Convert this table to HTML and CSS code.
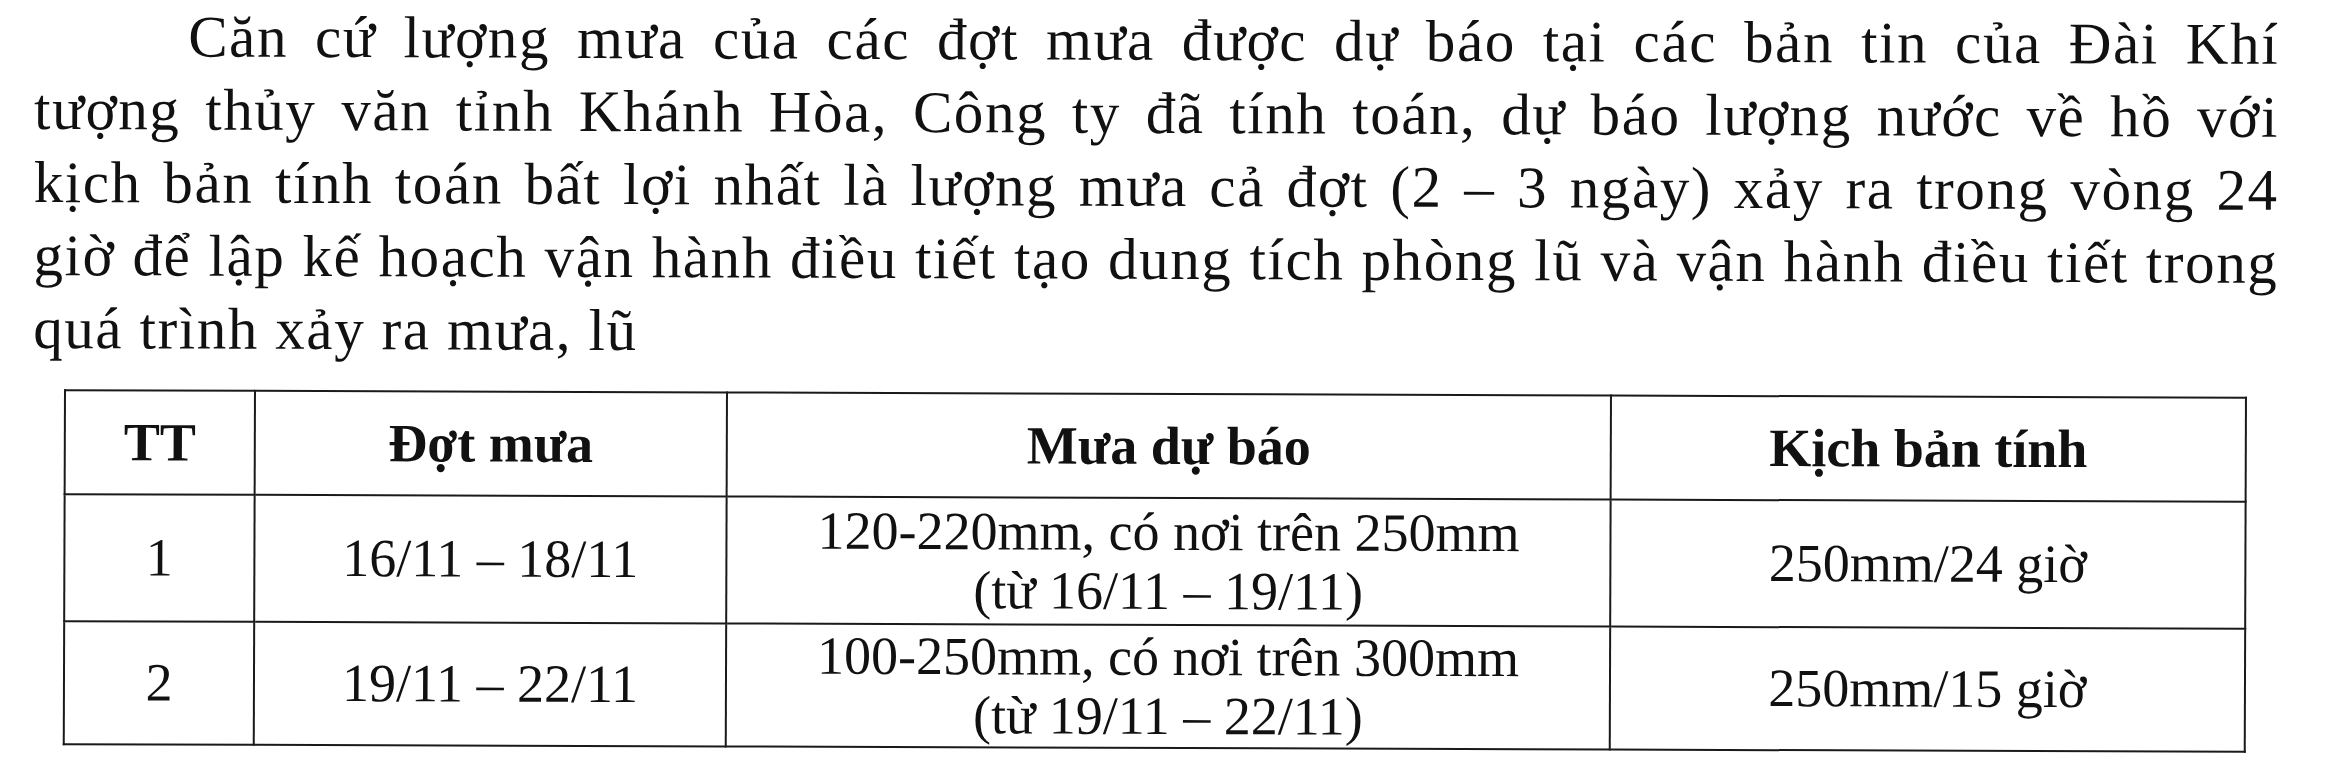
FILE: index.html
```html
<!DOCTYPE html>
<html lang="vi">
<head>
<meta charset="utf-8">
<title>Kịch bản mưa</title>
<link rel="stylesheet" href="styles.css">
</head>
<body>
<main class="page">
  <p class="para">
    <span class="ln ln-first">Căn cứ lượng mưa của các đợt mưa được dự báo tại các bản tin của Đài Khí</span>
    <span class="ln">tượng thủy văn tỉnh Khánh Hòa, Công ty đã tính toán, dự báo lượng nước về hồ với</span>
    <span class="ln">kịch bản tính toán bất lợi nhất là lượng mưa cả đợt (2 – 3 ngày) xảy ra trong vòng 24</span>
    <span class="ln">giờ để lập kế hoạch vận hành điều tiết tạo dung tích phòng lũ và vận hành điều tiết trong</span>
    <span class="ln ln-last">quá trình xảy ra mưa, lũ</span>
  </p>
  <table class="rain">
    <colgroup>
      <col class="c-tt">
      <col class="c-dot">
      <col class="c-mua">
      <col class="c-kb">
    </colgroup>
    <thead>
      <tr class="r-head">
        <th>TT</th>
        <th>Đợt mưa</th>
        <th>Mưa dự báo</th>
        <th>Kịch bản tính</th>
      </tr>
    </thead>
    <tbody>
      <tr class="r-1">
        <td>1</td>
        <td>16/11 – 18/11</td>
        <td>120-220mm, có nơi trên 250mm<br>(từ 16/11 – 19/11)</td>
        <td>250mm/24 giờ</td>
      </tr>
      <tr class="r-2">
        <td>2</td>
        <td>19/11 – 22/11</td>
        <td>100-250mm, có nơi trên 300mm<br>(từ 19/11 – 22/11)</td>
        <td>250mm/15 giờ</td>
      </tr>
    </tbody>
  </table>
</main>
</body>
</html>
```

FILE: styles.css
```css
html, body {
  margin: 0;
  padding: 0;
  background: #ffffff;
}

body {
  width: 2342px;
  height: 781px;
  overflow: hidden;
  font-family: "Liberation Serif", "Times New Roman", serif;
  color: #111111;
}

.page {
  padding: 4px 0 0 33px;
  width: 2245px;
  transform: rotate(0.2deg);
  transform-origin: 1171px 390px;
}

.para {
  margin: 0;
  font-size: 59px;
  line-height: 73px;
  letter-spacing: 1.6px;
}

.ln {
  display: block;
  text-align: justify;
  text-align-last: justify;
}

.ln-first {
  text-indent: 154px;
}

.ln-last {
  text-align: left;
  text-align-last: left;
}

.rain {
  margin: 24px 0 0 31px;
  border-collapse: collapse;
  table-layout: fixed;
  width: 2181px;
  font-size: 54px;
  line-height: 59px;
}

.c-tt { width: 190px; }
.c-dot { width: 472px; }
.c-mua { width: 884px; }
.c-kb { width: 635px; }

.rain th,
.rain td {
  border: 2.5px solid #1a1a1a;
  text-align: center;
  vertical-align: middle;
  padding: 0;
}

.rain th {
  font-weight: bold;
}

.r-head { height: 104px; }
.r-1 { height: 127px; }
.r-2 { height: 123px; }
```
